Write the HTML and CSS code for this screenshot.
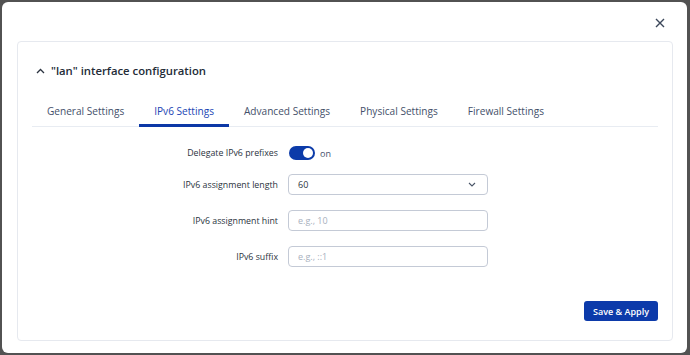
FILE: index.html
```html
<!DOCTYPE html>
<html lang="en">

<head>
    <meta charset="UTF-8">
    <meta name="viewport" content="width=device-width, initial-scale=1.0">
    <title>lan interface configuration</title>
    <link rel="stylesheet" href="styles.css">
</head>

<body>

    <div class="modal">
        <div class="modal-top">
            <button class="close" type="button" aria-label="Close">
                <svg width="10" height="10" viewBox="0 0 10 10">
                    <path d="M1 1 L9 9 M9 1 L1 9" stroke="#3b475a" stroke-width="1.4" fill="none" />
                </svg>
            </button>
        </div>

        <div class="card">
            <div class="card-header">
                <svg class="chevron" width="9" height="6" viewBox="0 0 9 6">
                    <path d="M1 5 L4.5 1.5 L8 5" stroke="#2b3340" stroke-width="1.3" fill="none" />
                </svg>
                <h2>"lan" interface configuration</h2>
            </div>

            <ul class="tabs">
                <li>General Settings</li>
                <li class="active">IPv6 Settings</li>
                <li>Advanced Settings</li>
                <li>Physical Settings</li>
                <li>Firewall Settings</li>
            </ul>

            <div class="form">
                <div class="form-row switch-row">
                    <label>Delegate IPv6 prefixes</label>
                    <div class="control">
                        <span class="switch"><span class="knob"></span></span>
                        <span class="switch-text">on</span>
                    </div>
                </div>

                <div class="form-row">
                    <label>IPv6 assignment length</label>
                    <div class="control">
                        <div class="select">
                            <span>60</span>
                            <svg width="8" height="5" viewBox="0 0 8 5">
                                <path d="M1 1 L4 4 L7 1" stroke="#4a5568" stroke-width="1.1" fill="none" />
                            </svg>
                        </div>
                    </div>
                </div>

                <div class="form-row">
                    <label>IPv6 assignment hint</label>
                    <div class="control">
                        <input class="input" type="text" placeholder="e.g., 10">
                    </div>
                </div>

                <div class="form-row">
                    <label>IPv6 suffix</label>
                    <div class="control">
                        <input class="input" type="text" placeholder="e.g., ::1">
                    </div>
                </div>
            </div>

            <div class="actions">
                <button class="btn-primary" type="button">Save &amp; Apply</button>
            </div>
        </div>
    </div>

</body>

</html>
```

FILE: styles.css
```css
/* Basic Reset */
* {
    margin: 0;
    padding: 0;
    box-sizing: border-box;
}

body {
    background-color: #525252;
    font-family: "Open Sans", "Noto Sans", sans-serif;
    color: #2b3340;
    padding: 2px 3px 2px 2px;
    height: 355px;
    overflow: hidden;
}

/* Modal window */
.modal {
    background-color: #fff;
    border-radius: 6px;
    height: 351px;
    padding: 0 14px 0 15px;
}

.modal-top {
    height: 39px;
    display: flex;
    justify-content: flex-end;
    align-items: center;
    padding-right: 8px;
}

.close {
    border: none;
    background: none;
    display: flex;
    margin-top: 3px;
}

/* Card */
.card {
    border: 1px solid #e6e9ef;
    border-radius: 4px;
    padding: 0 14px 19px 14px;
}

.card-header {
    display: flex;
    align-items: center;
    padding: 20px 0 15px 4px;
    height: 53px;
}

.chevron {
    margin-right: 6px;
}

.card-header h2 {
    font-size: 11.3px;
    font-weight: 600;
    line-height: 18px;
    color: #242c38;
}

/* Tabs */
.tabs {
    list-style: none;
    display: flex;
    border-bottom: 1px solid #e8ecf2;
}

.tabs li {
    font-size: 10.1px;
    line-height: 17px;
    color: #44506a;
    padding: 8px 15px 4px;
    border-bottom: 3px solid transparent;
    margin-bottom: -1px;
}

.tabs li.active {
    color: #1b45b4;
    border-bottom-color: #0c38a6;
}

/* Form */
.form {
    margin-top: 19px;
}

.form-row {
    display: grid;
    grid-template-columns: 246px 200px;
    column-gap: 10px;
    height: 21px;
}

.form-row + .form-row {
    margin-top: 15px;
}

.form-row.switch-row {
    height: 14px;
    margin-bottom: -1px;
}

.form-row label {
    font-size: 8.8px;
    color: #2b3340;
    display: flex;
    align-items: center;
    justify-content: flex-end;
}

.control {
    display: flex;
    align-items: center;
}

.switch {
    width: 26px;
    height: 14px;
    border-radius: 7px;
    background-color: #0c3ba9;
    position: relative;
    margin-left: 1px;
}

.knob {
    position: absolute;
    right: 2px;
    top: 2px;
    width: 10px;
    height: 10px;
    border-radius: 50%;
    background-color: #fff;
}

.switch-text {
    font-size: 9px;
    color: #44506a;
    margin-left: 5px;
}

.select,
.input {
    width: 200px;
    height: 21px;
    border: 1px solid #c4cad6;
    border-radius: 4px;
    font-family: inherit;
    font-size: 9px;
    color: #2b3340;
    padding: 0 9px;
}

.select {
    display: flex;
    justify-content: space-between;
    align-items: center;
    padding-right: 11px;
}

.input::placeholder {
    color: #a8b0be;
}

/* Actions */
.actions {
    display: flex;
    justify-content: flex-end;
    margin-top: 34px;
}

.btn-primary {
    background-color: #0c3aaa;
    color: #fff;
    border: none;
    border-radius: 3px;
    font-family: inherit;
    font-size: 9px;
    font-weight: 600;
    width: 74px;
    height: 20px;
}
```
